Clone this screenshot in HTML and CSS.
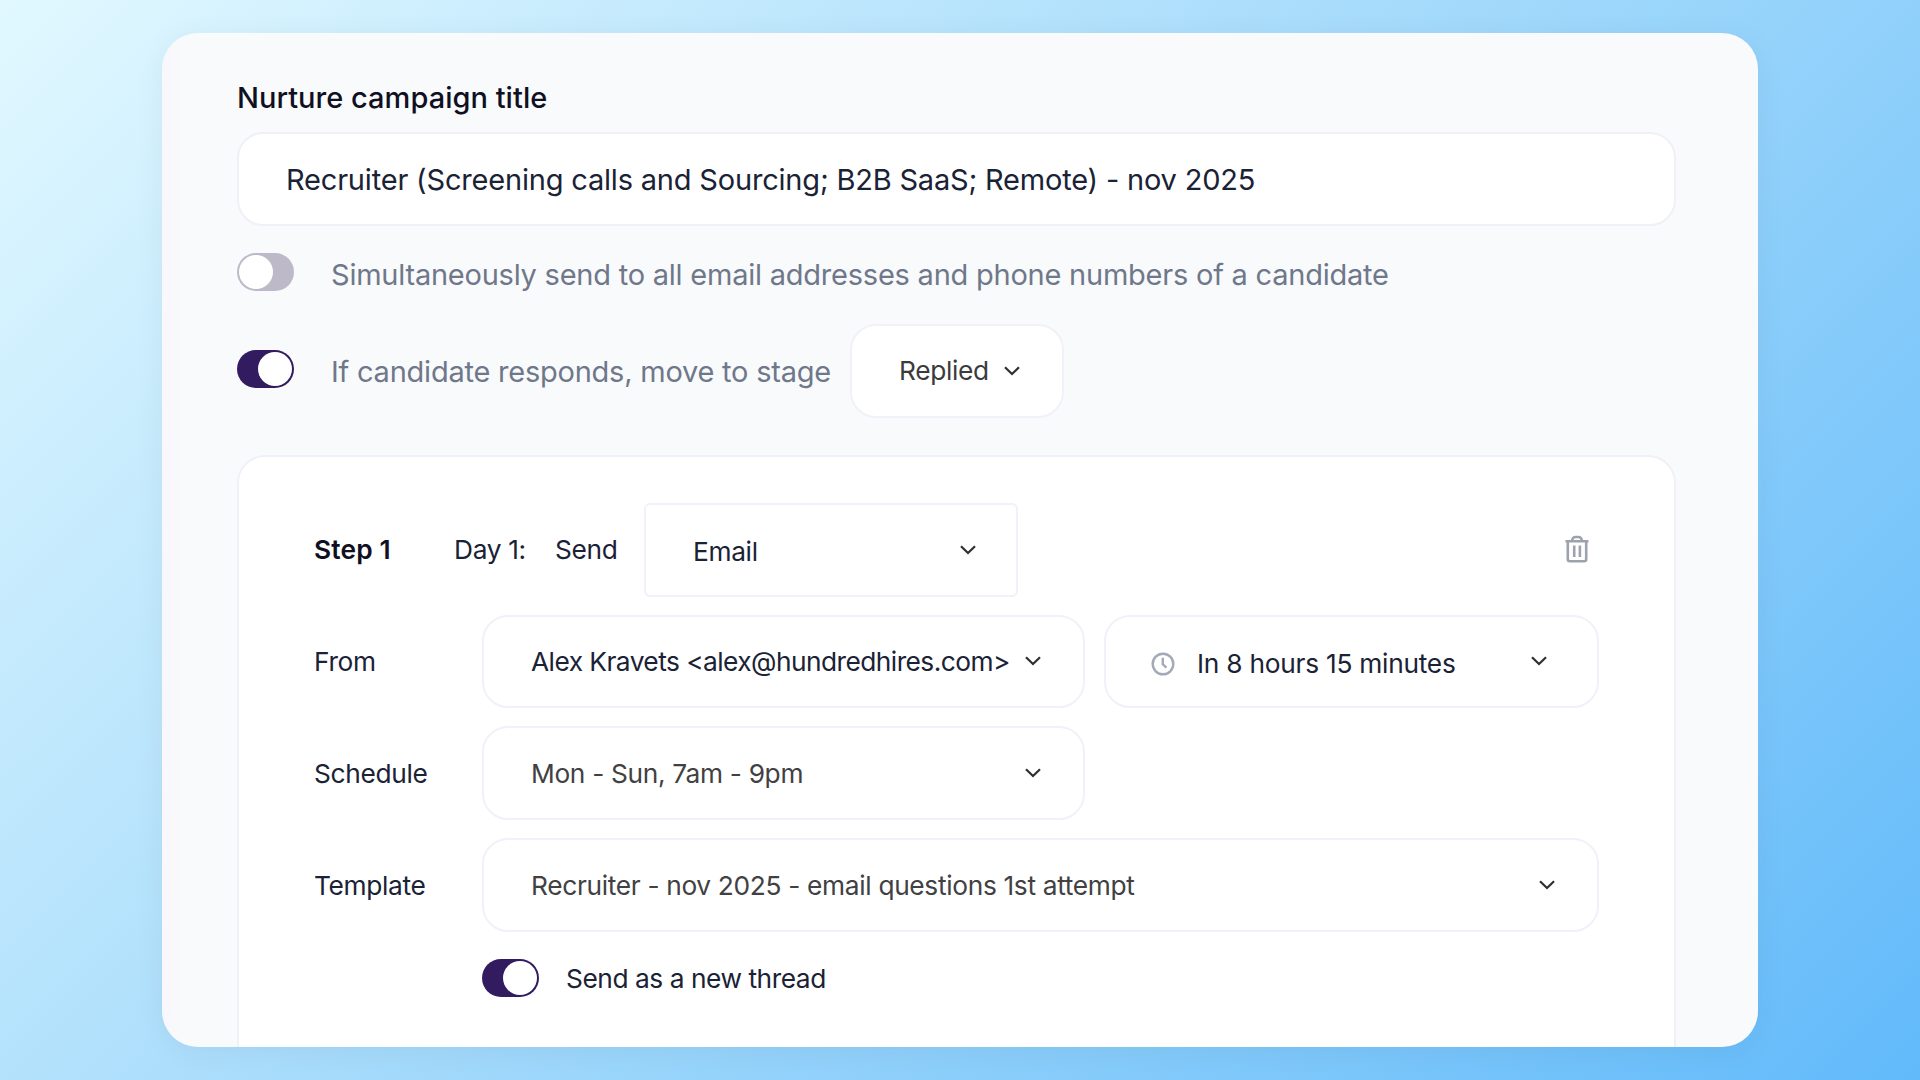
FILE: index.html
```html
<!DOCTYPE html>
<html lang="en">
  <head>
    <meta charset="UTF-8" />
    <meta name="viewport" content="width=device-width, initial-scale=1" />
    <title>Nurture campaign</title>
    <link rel="stylesheet" href="styles.css">
  </head>
  <body>
    <main class="panel">
      <h1 class="title">Nurture campaign title</h1>
      <div class="title-input">Recruiter (Screening calls and Sourcing; B2B SaaS; Remote) - nov 2025</div>

      <div class="option">
        <span class="toggle"></span>
        <span class="option-text">Simultaneously send to all email addresses and phone numbers of a candidate</span>
      </div>

      <div class="option respond">
        <span class="toggle on"></span>
        <span class="option-text">If candidate responds, move to stage</span>
        <div class="select stage">
          <span>Replied</span>
          <svg class="chevron" viewBox="0 0 16 10"><path d="M1 1.2 8 8l7-6.8" /></svg>
        </div>
      </div>

      <section class="step">
        <div class="row">
          <b class="step-name">Step 1</b>
          <span class="day">Day 1:</span>
          <span class="send">Send</span>
          <div class="select channel">
            <span class="low">Email</span>
            <svg class="chevron" viewBox="0 0 16 10"><path d="M1 1.2 8 8l7-6.8" /></svg>
          </div>
          <svg class="trash" viewBox="0 0 24 28">
            <path d="M.5 6.3h23M2.8 6.3v17.9a2 2 0 0 0 2 2h14.4a2 2 0 0 0 2-2V6.3M6.8 6.3C7.4 3.4 9 2 10.4 2h3.2c1.4 0 3 1.4 3.6 4.3M9.2 10.5V22M14.9 10.5V22" />
          </svg>
        </div>

        <div class="row">
          <span class="label">From</span>
          <div class="select medium">
            <span class="value sender">Alex Kravets &lt;alex@hundredhires.com&gt;</span>
            <svg class="chevron" viewBox="0 0 16 10"><path d="M1 1.2 8 8l7-6.8" /></svg>
          </div>
          <div class="select delay">
            <svg class="clock" viewBox="0 0 24 24">
              <circle cx="12" cy="12" r="10.3" />
              <path d="M11.8 5.8v6.5l3.6 3.4" />
            </svg>
            <span class="low">In 8 hours 15 minutes</span>
            <svg class="chevron" viewBox="0 0 16 10"><path d="M1 1.2 8 8l7-6.8" /></svg>
          </div>
        </div>

        <div class="row">
          <span class="label">Schedule</span>
          <div class="select medium gray">
            <span class="value">Mon - Sun, 7am - 9pm</span>
            <svg class="chevron" viewBox="0 0 16 10"><path d="M1 1.2 8 8l7-6.8" /></svg>
          </div>
        </div>

        <div class="row">
          <span class="label">Template</span>
          <div class="select wide gray">
            <span class="value">Recruiter - nov 2025 - email questions 1st attempt</span>
            <svg class="chevron" viewBox="0 0 16 10"><path d="M1 1.2 8 8l7-6.8" /></svg>
          </div>
        </div>

        <div class="thread">
          <span class="toggle on"></span>
          <span class="value">Send as a new thread</span>
        </div>
      </section>
    </main>
  </body>
</html>
```
FILE: styles.css
```css
* {
  box-sizing: border-box;
}
body {
  margin: 0;
  height: 1080px;
  padding: 33px 162px;
  overflow: hidden;
  background: linear-gradient(135deg, #e1f8ff, #a2d9fb 50%, #62bafa);
  font-family: Inter, "Liberation Sans", sans-serif;
  font-size: 26.3px;
  line-height: 32px;
  letter-spacing: -0.33px;
  color: #1a2235;
}
.panel {
  height: 1014px;
  padding: 47px 82px 0 75px;
  overflow: hidden;
  border-radius: 36px;
  background: linear-gradient(to right, #f8f7fc, #f9fafc 20px);
  box-shadow: 0 4px 30px rgba(0, 0, 0, 0.05);
}
.title {
  margin: 0 0 16px;
  font-size: 29px;
  line-height: 36px;
  font-weight: 500;
  letter-spacing: 0.03px;
  color: #0f1022;
}
.title-input {
  display: flex;
  align-items: center;
  height: 94px;
  padding: 2px 0 0 47px;
  border: 2px solid #f1eff7;
  border-radius: 26px;
  background: #fff;
  font-size: 29px;
  letter-spacing: -0.19px;
}
.option {
  display: flex;
  align-items: center;
  height: 38px;
  margin-top: 27px;
}
.option-text {
  margin-left: 37px;
  padding-top: 6px;
  font-size: 29px;
  letter-spacing: -0.23px;
  color: #6f788a;
}
.respond {
  height: 94px;
  margin-top: 33px;
}
.respond .toggle {
  margin-bottom: 4px;
}
.respond .option-text {
  width: 500px;
  padding-top: 2px;
  white-space: nowrap;
}
.toggle {
  flex: none;
  display: flex;
  width: 57px;
  height: 38px;
  padding: 2px;
  border-radius: 19px;
  background: #bdb9c9;
}
.toggle::before {
  content: "";
  width: 34px;
  height: 34px;
  border-radius: 50%;
  background: #fff;
}
.toggle.on {
  justify-content: flex-end;
  background: #321b5f;
}
.select {
  display: flex;
  align-items: center;
  justify-content: space-between;
  height: 93.6px;
  padding: 0 42px 0 47px;
  border: 2px solid #f2f0f8;
  border-radius: 26px;
  background: #fff;
  white-space: nowrap;
}
.value,
.label {
  padding-top: 2px;
}
.low {
  padding-top: 4px;
}
.chevron {
  flex: none;
  width: 16px;
  height: 10px;
  fill: none;
  stroke: #303030;
  stroke-width: 2.2;
}
.stage {
  width: 214px;
  margin-left: 19px;
  color: #3b3b3d;
}
.step {
  display: flex;
  flex-direction: column;
  gap: 18.1px;
  height: 700px;
  margin-top: 37px;
  padding: 46px 74px 0 75px;
  border: 2px solid #f1eff8;
  border-radius: 28px;
  background: #fff;
}
.row {
  display: flex;
  align-items: center;
  height: 93.6px;
}
.label {
  width: 168px;
}
.step-name {
  width: 140px;
  font-weight: 600;
  letter-spacing: 0.15px;
  color: #0f1022;
}
.day {
  width: 101px;
}
.send {
  width: 89px;
}
.channel {
  width: 374px;
  padding-right: 40px;
  border-radius: 6px;
}
.trash {
  width: 24px;
  height: 28px;
  margin: 0 11px 2px auto;
  fill: none;
  stroke: #9ca3af;
  stroke-width: 2.6;
}
.medium {
  width: 603px;
}
.sender {
  letter-spacing: -0.54px;
}
.delay {
  width: 495px;
  margin-left: 19px;
  padding-left: 45px;
  padding-right: 50px;
  letter-spacing: -0.25px;
}
.clock {
  width: 24px;
  height: 24px;
  margin-top: 5px;
  margin-right: 22px;
  fill: none;
  stroke: #a3a9b6;
  stroke-width: 2.4;
}
.delay .low {
  margin-right: auto;
  padding-top: 5px;
}
.wide {
  width: 1117px;
}
.gray {
  color: #414143;
}
.thread {
  display: flex;
  align-items: center;
  height: 38px;
  margin: 9px 0 0 168px;
  gap: 27px;
  letter-spacing: -0.45px;
}
```
